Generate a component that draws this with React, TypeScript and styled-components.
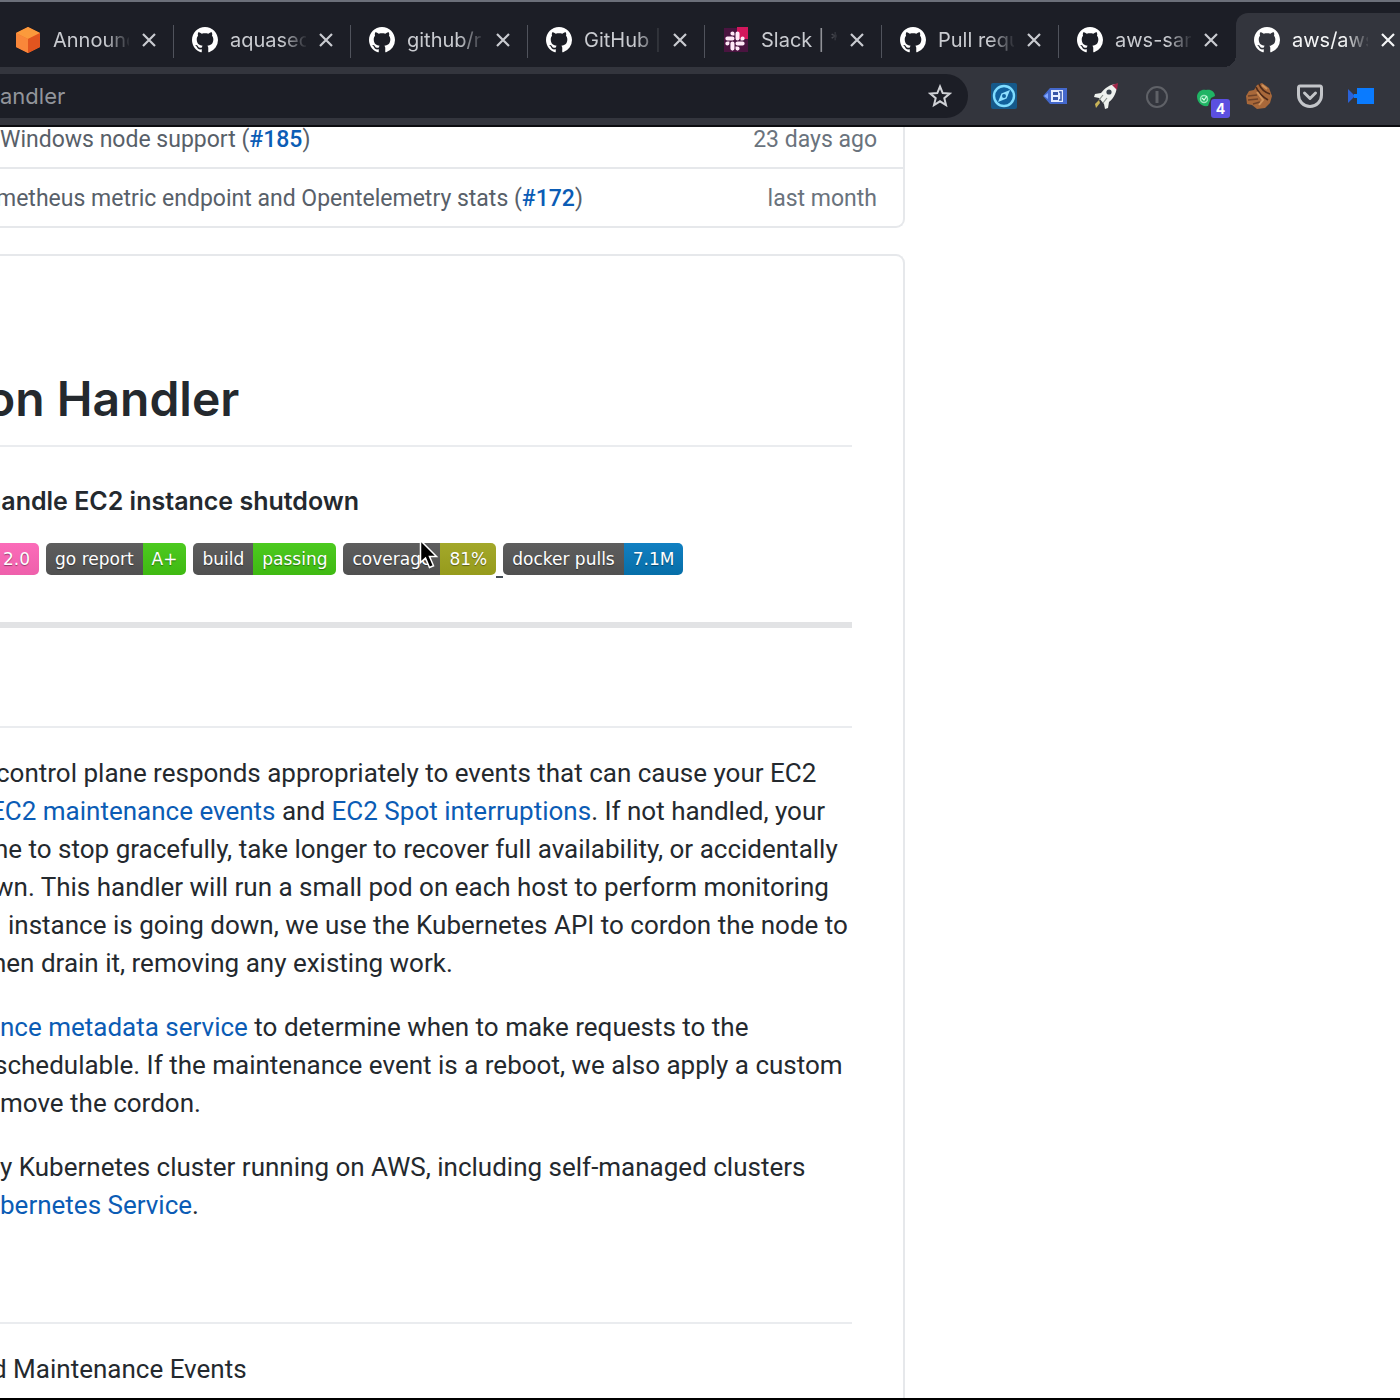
import React from "react";
import styled, { createGlobalStyle } from "styled-components";
import { FaSlack } from "react-icons/fa";

const GlobalStyle = createGlobalStyle`
  * { box-sizing: border-box; }
  body {
    margin: 0;
    background: #ffffff;
    font-family: Inter, "Liberation Sans", sans-serif;
  }
`;

const Window = styled.div`
  display: flex;
  flex-direction: column;
  height: 100vh;
  overflow: hidden;
  border-top: 2px solid #6b6f79;
  border-bottom: 2px solid #000000;
`;

const TabStrip = styled.nav`
  display: flex;
  flex: none;
  margin-left: -3px;
  padding-top: 11px;
  background: #1c1e26;
`;

const Tab = styled.div<{ $active?: boolean; $last?: boolean }>`
  position: relative;
  display: flex;
  flex: none;
  align-items: center;
  width: 177px;
  height: 54px;
  padding-left: 18px;
  border-radius: 12px 12px 0 0;
  color: ${(p) => (p.$active ? "#f4f5f6" : "#c9cbd0")};
  background: ${(p) => (p.$active ? "#33353d" : "transparent")};

  &::before {
    content: "";
    position: absolute;
    bottom: 0;
    left: -12px;
    display: ${(p) => (p.$active ? "block" : "none")};
    width: 12px;
    height: 12px;
    background: radial-gradient(circle at 0 0, transparent 12px, #33353d 12px);
  }

  &::after {
    content: "";
    position: absolute;
    top: 12px;
    right: 0;
    width: 1px;
    height: 33px;
    background: ${(p) => (p.$active || p.$last ? "transparent" : "#50535c")};
  }
`;

const TabIcon = styled.span`
  display: flex;
  width: 26px;
  height: 26px;
  color: #ffffff;

  svg {
    width: 26px;
    height: 26px;
  }
`;

const TabTitle = styled.a`
  width: 76px;
  margin-left: 12px;
  overflow: hidden;
  color: inherit;
  font-size: 20px;
  line-height: 28px;
  text-decoration: none;
  white-space: nowrap;
  mask-image: linear-gradient(to right, #000 52px, transparent 78px);
`;

const CloseButton = styled.button`
  display: flex;
  margin-left: 12px;
  padding: 0;
  border: 0;
  color: inherit;
  background: none;
`;

const Toolbar = styled.div`
  display: flex;
  flex: none;
  align-items: center;
  height: 60px;
  padding-right: 14px;
  border-bottom: 2px solid #0b0c10;
  background: #33353d;
`;

const AddressBar = styled.label`
  display: flex;
  flex: 1;
  align-items: center;
  min-width: 0;
  height: 44px;
  margin-right: 10px;
  padding-right: 16px;
  border-radius: 0 22px 22px 0;
  background: #1c1e26;
`;

const AddressInput = styled.input`
  flex: 1;
  min-width: 0;
  padding: 0;
  border: 0;
  outline: 0;
  color: #92959b;
  background: transparent;
  font: 22px Inter, "Liberation Sans", sans-serif;
`;

const StarButton = styled.button`
  display: flex;
  padding: 0;
  border: 0;
  background: none;
`;

const Extension = styled.button`
  position: relative;
  display: flex;
  flex: none;
  justify-content: center;
  width: 51px;
  padding: 0;
  border: 0;
  background: none;
`;

const Count = styled.span`
  position: absolute;
  right: 3px;
  bottom: -8px;
  width: 19px;
  height: 19px;
  border-radius: 3px;
  color: #ffffff;
  background: #5b4fe0;
  font: 700 14px/19px Inter, sans-serif;
  text-align: center;
`;

const Page = styled.main`
  flex: 1;
  min-height: 0;
  max-width: 905px;
  overflow: hidden;
  font-family: Roboto, Inter, sans-serif;
`;

const Link = styled.a`
  color: #0b5cb5;
  text-decoration: none;
`;

const FileTable = styled.table`
  width: 100%;
  margin-top: -19px;
  border: 2px solid #e6e8eb;
  border-width: 0 2px 2px 0;
  border-radius: 0 0 9px 0;
  border-spacing: 0;
  color: #586069;
  font-size: 23px;
  line-height: 28px;

  ${Link} {
    font-weight: 500;
  }
`;

const FileRow = styled.tr`
  height: 59px;

  & > td {
    border-top: 2px solid #e6e8eb;
  }
`;

const Message = styled.td`
  padding: 2px 0 0;
  white-space: nowrap;
`;

const Age = styled.td`
  padding: 2px 26px 0 0;
  color: #6a737d;
  text-align: right;
  white-space: nowrap;
`;

const Readme = styled.article`
  min-height: 1200px;
  margin-top: 26px;
  padding: 111px 51px 0 0;
  border: 2px solid #e6e8eb;
  border-width: 2px 2px 0 0;
  border-radius: 0 9px 0 0;
  color: #24292e;
  font-size: 26px;
  line-height: 38px;
`;

const Title = styled.h1`
  margin: 0;
  padding-bottom: 14px;
  border-bottom: 2px solid #eaecef;
  font-family: Inter, sans-serif;
  font-size: 48px;
  font-weight: 600;
  line-height: 64px;
`;

const Tagline = styled.h4`
  margin: 35px 0 23px;
  font-family: Inter, sans-serif;
  font-size: 25px;
  font-weight: 600;
`;

/* One line of running text; $cut is how much of its first glyph is scrolled out. */
const Line = styled.span<{ $cut?: number }>`
  display: block;
  text-indent: ${(p) => -(p.$cut ?? 0)}px;
  white-space: nowrap;
`;

const Badges = styled.div`
  display: flex;
  gap: 7px;
`;

const BadgeLink = styled.a`
  position: relative;
  display: flex;
  height: 32px;
  overflow: visible;
  color: #ffffff;
  font: 17px/32px "DejaVu Sans", sans-serif;
  text-decoration: none;
  text-shadow: 0 1px 1px rgba(0, 0, 0, 0.4);
`;

const BadgeName = styled.span`
  padding: 0 9px;
  border-radius: 5px 0 0 5px;
  background: linear-gradient(#5e5e5e, #505050);
`;

const BadgeValue = styled.span<{ $color: string }>`
  padding: 0 9px;
  border-radius: 0 5px 5px 0;
  background: ${(p) => p.$color};
`;

const GapUnderline = styled.span`
  align-self: flex-end;
  width: 7px;
  height: 2px;
  margin: 0 -7px -3px;
  background: #444d56;
`;

const Pointer = styled.svg`
  position: absolute;
  top: -4px;
  left: 76px;
`;

const ThickRule = styled.hr`
  height: 6px;
  margin: 47px 0 0;
  border: 0;
  background: #e2e3e5;
`;

const SectionRule = styled.hr`
  height: 2px;
  margin: 98px 0 26px;
  border: 0;
  background: #eaecef;
`;

const Paragraph = styled.p`
  margin: 0 0 26px;
`;

const Octocat = () => (
  <svg viewBox="0 0 16 16" fill="currentColor" aria-hidden="true">
    <path d="M8 0C3.58 0 0 3.58 0 8c0 3.54 2.29 6.53 5.47 7.59.4.07.55-.17.55-.38 0-.19-.01-.82-.01-1.49-2.01.37-2.53-.49-2.69-.94-.09-.23-.48-.94-.82-1.13-.28-.15-.68-.52-.01-.53.63-.01 1.08.58 1.23.82.72 1.21 1.87.87 2.33.66.07-.52.28-.87.51-1.07-1.78-.2-3.64-.89-3.64-3.95 0-.87.31-1.59.82-2.15-.08-.2-.36-1.02.08-2.12 0 0 .67-.21 2.2.82.64-.18 1.32-.27 2-.27.68 0 1.36.09 2 .27 1.53-1.04 2.2-.82 2.2-.82.44 1.1.16 1.92.08 2.12.51.56.82 1.27.82 2.15 0 3.07-1.87 3.75-3.65 3.95.29.25.54.73.54 1.48 0 1.07-.01 1.93-.01 2.2 0 .21.15.46.55.38A8.013 8.013 0 0 0 16 8c0-4.42-3.58-8-8-8z" />
  </svg>
);

const Cube = () => (
  <svg viewBox="0 0 26 26" aria-hidden="true">
    <path d="M13 0 25 6v14l-12 6L1 20V6z" fill="#f3702a" />
    <path d="M13 0 25 6l-12 6L1 6z" fill="#fb9a3c" />
    <path d="M13 12 25 6v14l-12 6z" fill="#e2551f" />
    <path d="M13 12 1 6v14l12 6z" fill="#f9873a" />
  </svg>
);

const SlackMark = () => (
  <svg viewBox="0 0 26 26" aria-hidden="true">
    <path d="M1 1h24v24H1z" fill="#4a1440" />
    <path d="M14 0h11v12H14z" fill="#d3175c" />
    <FaSlack x={1} y={3} width={22} height={22} style={{ width: 22, height: 22 }} color="#ffe9f8" />
  </svg>
);

const Cross = () => (
  <svg width="16" height="16" viewBox="0 0 16 16" aria-hidden="true">
    <path d="M2 2l12 12M14 2 2 14" stroke="currentColor" strokeWidth="2.2" fill="none" />
  </svg>
);

const Compass = () => (
  <svg width="28" height="28" viewBox="0 0 28 28" aria-hidden="true">
    <rect x="1" y="1" width="26" height="26" rx="2" fill="#15598a" />
    <circle cx="14" cy="14" r="10" fill="#11619d" stroke="#7fdcff" strokeWidth="2.4" />
    <path d="M20 8l-3.400 8.600L8 20l3.400-8.600z" fill="#8fe0ff" />
    <circle cx="14" cy="14" r="2" fill="#11619d" />
  </svg>
);

const TagTool = () => (
  <svg width="28" height="28" viewBox="0 0 28 28" aria-hidden="true">
    <path d="M2 14 9 6h17v16H9z" fill="#4468cc" />
    <path d="M10 8h12v12H10z" fill="#e4ecff" />
    <path d="M12 10h5v3h-5zM12 15h5v3h-5z" fill="#3554a8" />
    <path d="M18 10h2v8h-2" fill="none" stroke="#3554a8" strokeWidth="1.500" />
    <path d="M3 14l4-3v6z" fill="#7fa5ff" />
  </svg>
);

const Rocket = () => (
  <svg width="28" height="28" viewBox="0 0 28 28" aria-hidden="true">
    <path d="M8 21 4 26l-1-4 4-4z" fill="#c9b458" />
    <path d="M25 2c-7 0-12 4-16 9l-6 1-1 3 5 1 5 6 1 5 3-1 1-6c5-4 8-10 8-18z" fill="#eef1ee" />
    <path d="M26 1l-6 2 5 5z" fill="#a02648" />
    <circle cx="17" cy="10" r="2.600" fill="#39424c" />
    <path d="M11 13l-4 5M15 16l-4 5" stroke="#8b948f" strokeWidth="1.200" />
  </svg>
);

const KeyRing = () => (
  <svg width="28" height="28" viewBox="0 0 28 28" fill="none" stroke="#5f6167" aria-hidden="true">
    <circle cx="14" cy="15" r="10" strokeWidth="2" />
    <path d="M14 9v12" strokeWidth="3" />
  </svg>
);

const GreenCloud = () => (
  <svg width="28" height="28" viewBox="0 0 28 28" aria-hidden="true">
    <path d="M3 14c1-5 5-7 9-6 5-1 9 2 9 6l-4 2-3 8c-7 1-11-4-11-10z" fill="#1fb464" />
    <circle cx="10" cy="17" r="3.500" fill="none" stroke="#9be8bd" strokeWidth="1.500" />
    <path d="M8 16l2 2 3-4" fill="none" stroke="#d6ffe6" strokeWidth="1.200" />
  </svg>
);

const Fist = () => (
  <svg width="28" height="28" viewBox="0 0 28 28" aria-hidden="true">
    <path d="M1 14l3-5 5-1 3-5 5-2 7 5 3 8-2 7-5 5-8 1-5-4-5-1z" fill="#a8683a" />
    <path d="M14 2c2 5 5 8 11 10M11 5c2 5 7 10 12 13" fill="none" stroke="#4f2b1a" strokeWidth="1.800" />
    <path d="M3 14l9-1M3 18l10-1M8 22l7-2" fill="none" stroke="#6e4228" strokeWidth="1.400" />
    <path d="M17 3l5 4M12 10l6 8-4 5" fill="none" stroke="#cf925b" strokeWidth="2" />
  </svg>
);

const Pocket = () => (
  <svg width="28" height="28" viewBox="0 0 28 28" fill="none" stroke="#c3c5c9" strokeWidth="3" aria-hidden="true">
    <path d="M4 4h20q1.500 0 1.500 2v7a11.500 11.500 0 0 1-23 0V6Q2.500 4 4 4z" />
    <path d="M8.500 11l5.500 5.500L19.500 11" strokeLinecap="round" strokeLinejoin="round" />
  </svg>
);

const Camera = () => (
  <svg width="28" height="28" viewBox="0 0 28 28" aria-hidden="true">
    <path d="M10 6h17v16H10z" fill="#0a7bff" />
    <path d="M1 7l7 7-7 7z" fill="#2a62d8" />
    <path d="M7 12h4v4H7z" fill="#0a7bff" />
  </svg>
);

const tabs = [
  { title: "Announc", icon: <Cube /> },
  { title: "aquasec", icon: <Octocat /> },
  { title: "github/r", icon: <Octocat /> },
  { title: "GitHub |", icon: <Octocat /> },
  { title: "Slack | *", icon: <SlackMark /> },
  { title: "Pull requ", icon: <Octocat /> },
  { title: "aws-sam", icon: <Octocat /> },
  { title: "aws/aws", icon: <Octocat /> },
];

const extensions = [
  { name: "Compass", icon: <Compass /> },
  { name: "Tags", icon: <TagTool /> },
  { name: "Rocket", icon: <Rocket /> },
  { name: "Passwords", icon: <KeyRing /> },
  { name: "Checks", icon: <GreenCloud />, count: 4 },
  { name: "Fist", icon: <Fist /> },
  { name: "Pocket", icon: <Pocket /> },
  { name: "Camera", icon: <Camera /> },
];

const green = "linear-gradient(#4cca1f, #3fb912)";

export default function App() {
  return (
    <Window>
      <GlobalStyle />
      <TabStrip>
        {tabs.map((tab, i) => (
          <Tab key={tab.title} $active={i === 7} $last={i === 6}>
            <TabIcon>{tab.icon}</TabIcon>
            <TabTitle href="#">{tab.title}</TabTitle>
            <CloseButton aria-label="Close tab">
              <Cross />
            </CloseButton>
          </Tab>
        ))}
      </TabStrip>
      <Toolbar>
        <AddressBar>
          <AddressInput aria-label="Address" defaultValue="andler" />
          <StarButton aria-label="Bookmark">
            <svg width="24" height="24" viewBox="0 0 24 24" fill="none" stroke="#d0d2d6" strokeWidth="2">
              <path d="M12 2.500l2.700 6.600 7 .5-5.400 4.600 1.700 6.900-6-3.800-6 3.800 1.700-6.900L2.300 9.600l7-.5z" />
            </svg>
          </StarButton>
        </AddressBar>
        {extensions.map((ext) => (
          <Extension key={ext.name} aria-label={ext.name}>
            {ext.icon}
            {ext.count && <Count>{ext.count}</Count>}
          </Extension>
        ))}
      </Toolbar>
      <Page>
        <FileTable>
          <tbody>
            <FileRow>
              <Message>
                <Line>
                  Windows node support (<Link href="#">#185</Link>)
                </Line>
              </Message>
              <Age>23 days ago</Age>
            </FileRow>
            <FileRow>
              <Message>
                <Line $cut={4}>
                  metheus metric endpoint and Opentelemetry stats (<Link href="#">#172</Link>)
                </Line>
              </Message>
              <Age>last month</Age>
            </FileRow>
          </tbody>
        </FileTable>
        <Readme>
          <Title>
            <Line $cut={14}>on Handler</Line>
          </Title>
          <Tagline>
            <Line $cut={14}>handle EC2 instance shutdown</Line>
          </Tagline>
          <Badges>
            <BadgeLink href="#">
              <BadgeValue $color="linear-gradient(#fb6cb9, #ee60ab)">
                <Line $cut={6}>2.0</Line>
              </BadgeValue>
            </BadgeLink>
            <BadgeLink href="#">
              <BadgeName>go report</BadgeName>
              <BadgeValue $color={green}>A+</BadgeValue>
            </BadgeLink>
            <BadgeLink href="#">
              <BadgeName>build</BadgeName>
              <BadgeValue $color={green}>passing</BadgeValue>
            </BadgeLink>
            <BadgeLink href="#">
              <BadgeName>coverage</BadgeName>
              <BadgeValue $color="linear-gradient(#a3a82a, #969b1c)">81%</BadgeValue>
              <Pointer width="20" height="32" viewBox="0 0 20 32" aria-hidden="true">
                <path
                  d="M1.500 1.500v22l5-4.500 4 9.500 4-1.700-4-9.300h7z"
                  fill="#000000"
                  stroke="#ffffff"
                  strokeWidth="1.500"
                />
              </Pointer>
            </BadgeLink>
            <GapUnderline />
            <BadgeLink href="#">
              <BadgeName>docker pulls</BadgeName>
              <BadgeValue $color="linear-gradient(#1180c2, #066ea8)">7.1M</BadgeValue>
            </BadgeLink>
          </Badges>
          <ThickRule />
          <SectionRule />
          <Paragraph>
            <Line $cut={4}>control plane responds appropriately to events that can cause your EC2</Line>
            <Line $cut={10}>
              <Link href="#">EC2 maintenance events</Link> and <Link href="#">EC2 Spot interruptions</Link>. If not
              handled, your
            </Line>
            <Line $cut={6}>ne to stop gracefully, take longer to recover full availability, or accidentally</Line>
            <Line $cut={6}>wn. This handler will run a small pod on each host to perform monitoring</Line>
            <Line $cut={-8}>instance is going down, we use the Kubernetes API to cordon the node to</Line>
            <Line $cut={8}>hen drain it, removing any existing work.</Line>
          </Paragraph>
          <Paragraph>
            <Line>
              <Link href="#">nce metadata service</Link> to determine when to make requests to the
            </Line>
            <Line $cut={6}>schedulable. If the maintenance event is a reboot, we also apply a custom</Line>
            <Line>move the cordon.</Line>
          </Paragraph>
          <Paragraph>
            <Line>y Kubernetes cluster running on AWS, including self-managed clusters</Line>
            <Line>
              <Link href="#">bernetes Service</Link>.
            </Line>
          </Paragraph>
          <SectionRule />
          <Paragraph>
            <Line $cut={8}>d Maintenance Events</Line>
          </Paragraph>
        </Readme>
      </Page>
    </Window>
  );
}
